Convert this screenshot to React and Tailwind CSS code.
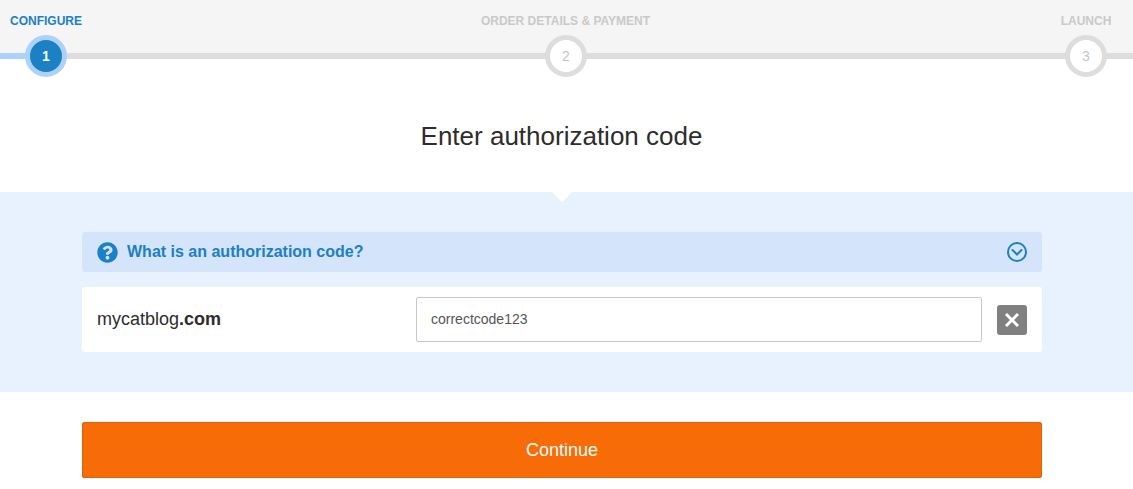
import React from "react";
import { FaQuestionCircle } from "react-icons/fa";

function Label({ children, active, extra = "" }) {
  return (
    <div className={"w-[92px] flex justify-center whitespace-nowrap text-[12px] font-bold leading-[14px] " + extra + " " + (active ? "text-[#1b80c4]" : "text-[#c9c9c9]")}>
      {children}
    </div>
  );
}

function Circle({ n, active }) {
  return (
    <div
      className={
        "relative shrink-0 w-[42px] h-[42px] rounded-full border-[5px] flex items-center justify-center text-[14px] " +
        (active
          ? "border-[#acd1fd] bg-[#1b80c4] text-white font-bold"
          : "border-[#dddddd] bg-white text-[#c4c4c4]")
      }
    >
      {n}
    </div>
  );
}

export default function App() {
  return (
    <div className="w-[1133px] h-[489px] bg-white overflow-hidden font-['Liberation_Sans',Arial,sans-serif] text-[#2d2d2d]">
      <div className="h-[53px] bg-[#f5f5f5] pt-[14px] pr-[1px] flex justify-between items-start">
        <Label active>CONFIGURE</Label>
        <Label extra="pr-[1px]">ORDER DETAILS &amp; PAYMENT</Label>
        <Label>LAUNCH</Label>
      </div>
      <div className="relative h-[6px] bg-[#dddddd] flex items-center justify-between pl-[25px] pr-[26px]">
        <div className="absolute left-0 top-0 h-[6px] w-[46px] bg-[#acd1fd]" />
        <Circle n="1" active />
        <Circle n="2" />
        <Circle n="3" />
      </div>

      <h1 className="mt-[59px] h-[36px] text-center text-[26px] leading-[36px] font-normal pr-[10px]">Enter authorization code</h1>

      <div className="relative mt-[38px] h-[200px] bg-[#e8f2ff] pl-[82px] pr-[91px] pt-[40px]">
        <div className="absolute left-[552px] top-0 w-0 h-0 border-l-[10px] border-r-[10px] border-t-[10px] border-l-transparent border-r-transparent border-t-white" />
        <div className="h-[40px] rounded-[3px] bg-[#d4e4fb] pl-[15px] pr-[15px] flex items-center justify-between">
          <div className="flex items-center gap-[9px] text-[#1b80c4] text-[16px] font-bold">
            <FaQuestionCircle className="w-[21px] h-[21px] text-[#1b80c4]" />
            <span>What is an authorization code?</span>
          </div>
          <svg width="20" height="20" viewBox="0 0 20 20" fill="none" stroke="#1b80c4" strokeWidth="2">
            <circle cx="10" cy="10" r="9" />
            <path d="M5.5 8 L10 12.5 L14.5 8" strokeLinecap="round" />
          </svg>
        </div>
        <div className="mt-[15px] h-[65px] rounded-[3px] bg-white pl-[15px] pr-[15px] flex items-center">
          <div className="w-[319px] text-[18px]">
            mycatblog<span className="font-bold">.com</span>
          </div>
          <div className="w-[566px] h-[45px] border border-[#c8c8c8] rounded-[2px] bg-white flex items-center px-[14px] text-[14px] text-[#555555]">
            correctcode123
          </div>
          <div className="ml-[15px] w-[30px] h-[30px] rounded-[3px] bg-[#808080] flex items-center justify-center">
            <svg width="18" height="18" viewBox="0 0 18 18" fill="none" stroke="white" strokeWidth="3">
              <path d="M3 3 L15 15 M15 3 L3 15" />
            </svg>
          </div>
        </div>
      </div>

      <div className="mt-[30px] ml-[82px] mr-[91px] h-[56px] rounded-[2px] bg-[#f76c07] border border-[#e06206] flex items-center justify-center text-white text-[18px]">
        Continue
      </div>
    </div>
  );
}
